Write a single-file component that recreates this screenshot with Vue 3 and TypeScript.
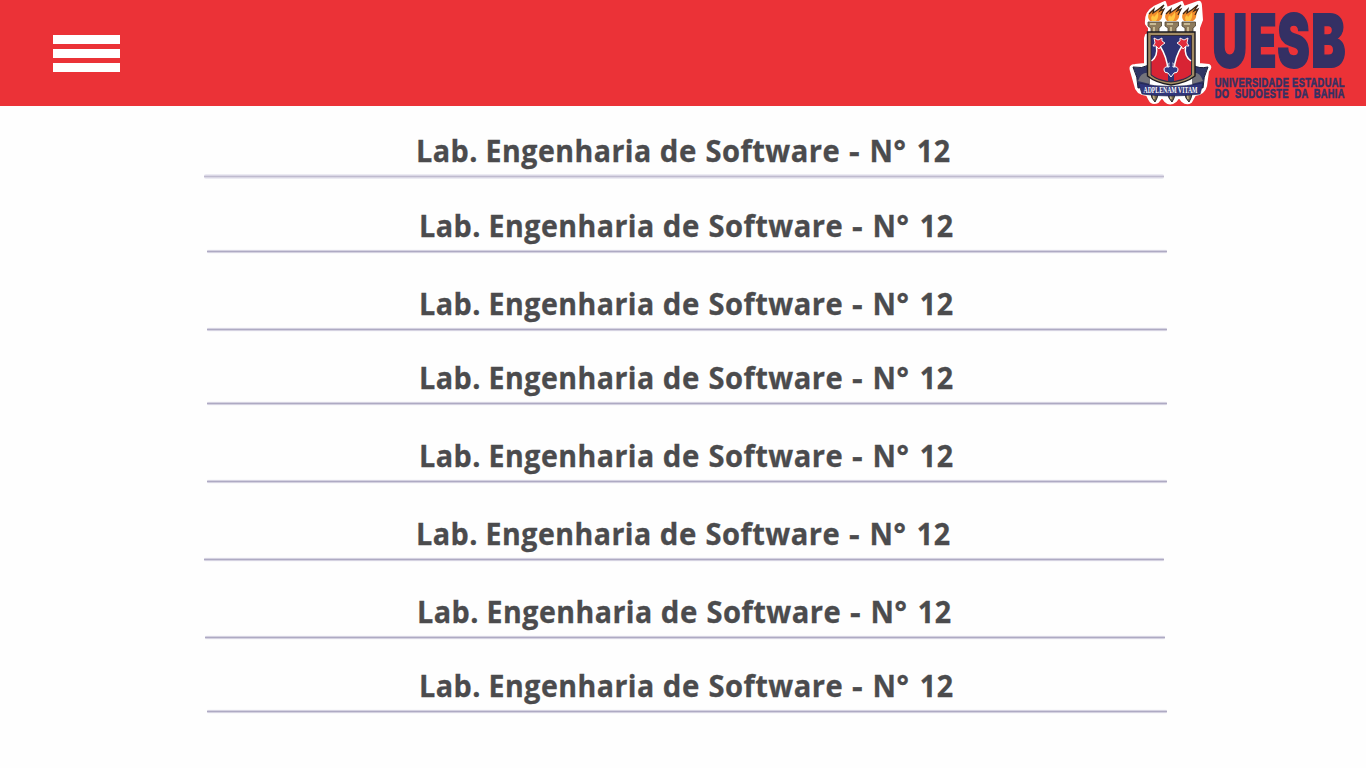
<script setup lang="ts">
interface Room {
  words: string[]
  shift: number
  gap: number
  soft?: boolean
}

const words = 'Lab. Engenharia de Software - N° 12'.split(' ')
const rooms: Room[] = [
  { words, shift: 0, gap: 75, soft: true },
  { words, shift: 3, gap: 78 },
  { words, shift: 3, gap: 74 },
  { words, shift: 3, gap: 78 },
  { words, shift: 3, gap: 78 },
  { words, shift: 0, gap: 78 },
  { words, shift: 1, gap: 74 },
  { words, shift: 3, gap: 78 },
]
// start and advance of each word on the line
const starts: number[] = [212, 281.6, 455.8, 501.4, 645, 665.6, 712.8]
const widths: number[] = [62, 166.2, 37, 134.8, 11.2, 36.8, 33.7]
const torches: number[] = [0, 17, 34]
const letters = [
  { c: 'U', x: 1212.3, w: 35 },
  { c: 'E', x: 1249.6, w: 27 },
  { c: 'S', x: 1277.2, w: 32.5 },
  { c: 'B', x: 1311.2, w: 34.3 },
]
</script>

<template>
  <div class="page">
    <header class="bar">
      <button class="menu" aria-label="Menu"><i /><i /><i /></button>
      <svg class="logo" width="240" height="106" viewBox="1126 0 240 106">
        <!-- white contour behind the crest -->
        <path
          d="M1146 35 L1149 34 V28 L1146 24 Q1145 12 1154 7 L1165 2 L1167 8 L1182 2 L1184 7 L1198 2 Q1201 1 1201 6 L1202 20 L1199 28 V34 L1199 36 V64 L1209 65 Q1212 67 1208 71 L1206 86 Q1204 94 1195 95 L1191 102 Q1187 105 1182 101 L1179 97 L1176 101 Q1170 106 1165 101 L1162 97 L1158 102 Q1152 105 1149 99 L1147 95 Q1136 94 1135 85 L1131 71 Q1129 65 1135 65 L1145 64 V38Z"
          fill="#fff" stroke="#fff" stroke-width="2" stroke-linejoin="round"
        />
        <!-- handles under the ribbon -->
        <g v-for="x in torches" :key="'h' + x" :transform="`translate(${x} 0)`">
          <path d="M1150 89 H1159 L1157 98 L1155 102 L1152 98Z" fill="#75684f" stroke="#242128" stroke-width="1" />
          <path d="M1153 91 L1154 99" stroke="#c7b58b" stroke-width="1.5" />
        </g>
        <!-- torches -->
        <g v-for="x in torches" :key="x" :transform="`translate(${x} 0)`">
          <path d="M1150 21 C1146 16 1149 12 1154 9 L1153 13 C1158 11 1158 8 1164 5 L1160 11 L1164 9 C1161 14 1164 18 1159 21Z" fill="#f28c2a" />
          <path d="M1152 21 C1150 17 1152 16 1153 15 L1154 17 Q1157 14 1158 12 Q1159 18 1156 21Z" fill="#ffc543" />
          <path d="M1149 14 L1154 9 L1153 13 Q1158 10 1164 5 L1160 11 L1164 9 L1161 15" fill="none" stroke="#3a2416" stroke-width="1.2" />
          <path d="M1148 22 H1161.500 V26 L1159 28 V34 H1151 V28 L1148 26Z" fill="#8e7b5c" stroke="#4b4030" stroke-width=".8" />
          <path d="M1150 24 H1156 M1154 27 V33" stroke="#c9ba94" stroke-width="2" />
        </g>
        <!-- ribbon tails -->
        <path d="M1133 67 Q1142 69 1149 65 V86 L1138 88 Q1138 77 1133 67Z M1208 67 Q1199 69 1193 65 V86 L1203 88 Q1203 77 1208 67Z" fill="#303564" stroke="#171b37" stroke-width="1" />
        <path d="M1138 81 Q1141 71 1150 73 V84Z M1203 81 Q1200 71 1192 73 V84Z" fill="#73737b" />
        <!-- shield -->
        <path d="M1147.500 32 H1195 V76 Q1186 83 1171 85 Q1156 83 1147.500 76Z" fill="#a28b63" stroke="#191820" stroke-width="1.4" />
        <path d="M1151 35.500 H1191.500 V75 Q1184 81 1171 82 Q1158 81 1151 75Z" fill="#2e3273" stroke="#24202d" stroke-width=".8" />
        <path d="M1151.500 61 Q1158 56 1156.500 47 H1160 Q1167 57 1168 70 V81 Q1157 79 1151.500 74.500Z M1191 61 Q1184 56 1185.500 47 H1182 Q1175 57 1174 70 V81 Q1185 79 1191 74.500Z" fill="#d82434" />
        <path d="M1160 46 Q1167 57 1168 70 M1156.500 47 Q1158 56 1151.500 61 M1182 46 Q1175 57 1174 70 M1185.500 47 Q1184 56 1191 61" fill="none" stroke="#fff" stroke-width="1.500" />
        <path d="M1154 38 L1158 40 L1162 38 L1162 41 L1165 43 L1161 46 L1159 49 L1156 46 L1153 46 L1155 43Z M1188 38 L1184 40 L1180 38 L1180 41 L1177 43 L1181 46 L1183 49 L1186 46 L1189 46 L1187 43Z" fill="#e22b3b" stroke="#fff" stroke-width=".9" />
        <path d="M1169 63 H1173 L1173 67 Q1178 66 1178 70 Q1178 73 1174 73 L1171 77 L1168 73 Q1164 73 1164 70 Q1164 66 1169 67Z" fill="#303a85" stroke="#fff" stroke-width="1" />
        <path d="M1169.500 60 H1172.500 V66 H1169.500Z" fill="#2e3273" />
        <!-- motto -->
        <path d="M1138.500 83 Q1170 90 1203 83 L1200 94 Q1170 98 1142 94Z" fill="#303579" stroke="#20244d" stroke-width=".7" />
        <text class="motto" x="1143.500" y="92.800" textLength="54" lengthAdjust="spacingAndGlyphs">ADPLENAM VITAM</text>
        <!-- wordmark -->
        <text class="word"><tspan v-for="l in letters" :key="l.c" :x="l.x" y="67.300" :textLength="l.w" lengthAdjust="spacingAndGlyphs">{{ l.c }}</tspan></text>
        <text class="sub" x="1214.800" y="87.200" textLength="130" lengthAdjust="spacingAndGlyphs">UNIVERSIDADE ESTADUAL</text>
        <text class="sub wide" x="1214.800" y="98.300" textLength="130" lengthAdjust="spacingAndGlyphs">DO SUDOESTE DA BAHIA</text>
      </svg>
    </header>
    <main class="list">
      <div
        v-for="(room, i) in rooms"
        :key="i"
        class="room"
        :style="{ height: room.gap + 'px', marginLeft: 204 + room.shift + 'px' }"
      >
        <svg class="name" width="960" height="42">
          <text><tspan v-for="(w, n) in room.words" :key="n" :x="starts[n]" y="30.4" :textLength="widths[n]" lengthAdjust="spacingAndGlyphs">{{ w }}</tspan></text>
        </svg>
        <hr :class="['rule', { soft: room.soft }]" />
      </div>
    </main>
  </div>
</template>

<style>
body { background: #fefefe; overflow: hidden; }
</style>

<style scoped>
.page { height: 768px; overflow: hidden; background: #fefefe; }
.bar { height: 106px; display: flex; justify-content: space-between; background: #eb3237; }
.menu { width: 67px; height: 37px; margin: 35px 0 0 53px; padding: 0; border: 0; background: none; display: flex; flex-direction: column; justify-content: space-between; }
.menu i { height: 9px; width: 67px; background: #fff; }
.logo { display: block; }
.motto { font: bold 8px "Liberation Serif", serif; fill: #fff; }
.word { font: 900 73.5px Inter, "Liberation Sans", sans-serif; fill: #343064; stroke: #343064; stroke-width: 1.8px; }
.sub { font: bold 13.3px "Liberation Sans", sans-serif; letter-spacing: .5px; fill: #343064; stroke: #343064; stroke-width: .6px; }
.wide { word-spacing: 4px; }
.list { padding-top: 26px; }
.room { width: 960px; }
.name { display: block; font: bold 29.5px "Open Sans", "Noto Sans", sans-serif; letter-spacing: .5px; fill: #4b4b4d; stroke: #4b4b4d; stroke-width: .3px; }
.rule { width: 960px; height: 5px; margin: 0; border: 0; border-radius: 2px; background: linear-gradient(#f8f8fb, #e0deea 20%, #d7d4e2 35%, #bfbbcf 50%, #d7d4e2 65%, #e0deea 80%, #f8f8fb); }
.rule:not(.soft) { background: linear-gradient(#f9f9fb 10%, #d5d2e1 30%, #aeaac3 50%, #d5d2e1 70%, #f9f9fb 90%); }
</style>
